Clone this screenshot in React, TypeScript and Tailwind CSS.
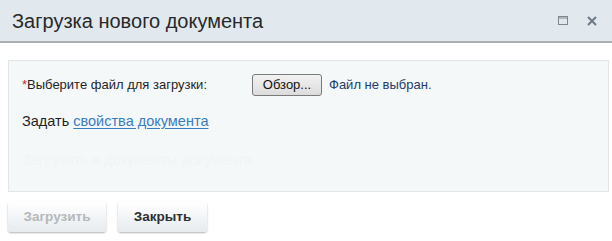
import React from 'react'

export default function App() {
  return (
    <div className="w-[612px] h-[241px] bg-white overflow-hidden font-['Liberation_Sans',Arial,sans-serif]">
      <div className="h-[43px] bg-[#e1e9ef] border-b-2 border-[#a8aeb3] flex items-center justify-between pl-[12px] pr-[15px]">
        <h1 className="text-[20px] text-[#282828] leading-none">Загрузка нового документа</h1>
        <div className="flex items-center gap-[19px] text-[#7c8790]">
          <svg width="10" height="9" viewBox="0 0 10 9" fill="none">
            <rect x="0.5" y="0.5" width="9" height="8" stroke="#7c8790" />
            <line x1="0.5" y1="2" x2="9.5" y2="2" stroke="#7c8790" />
          </svg>
          <svg width="10" height="10" viewBox="0 0 10 10">
            <path d="M1 1 L9 9 M9 1 L1 9" stroke="#6e7a84" strokeWidth="2" />
          </svg>
        </div>
      </div>

      <div className="pl-[8px] pr-[3px] pt-[17px]">
        <div className="h-[132px] bg-[#f5f8f9] border border-[#e0e6e8] pl-[13px] pt-[13px] text-[13px] text-[#1f1f1f]">
          <div className="flex items-center h-[22px]">
            <span className="w-[230px]">
              <span className="text-[#d0262a]">*</span>Выберите файл для загрузки:
            </span>
            <button className="h-[22px] w-[70px] border border-[#7a7a7a] rounded-[3px] bg-gradient-to-b from-[#f2f2f2] to-[#dcdcdc] text-[13px] text-[#111]">
              Обзор...
            </button>
            <span className="ml-[7px] text-[#1d3c6a]">Файл не выбран.</span>
          </div>
          <div className="mt-[15px] text-[14.5px]">
            Задать <a className="text-[#3a7cc0] underline underline-offset-2">свойства документа</a>
          </div>
          <div className="mt-[17px] text-[14.5px] text-[#f1f4f6]">
            Загрузить в документы документа
          </div>
        </div>
      </div>

      <div className="flex gap-[12px] pl-[8px] pt-[10px]">
        <button className="w-[98px] h-[30px] rounded-[3px] bg-gradient-to-b from-[#ffffff] to-[#e6ebee] shadow-[0_1px_2px_rgba(0,0,0,0.3)] text-[13.5px] font-bold text-[#b4b9bc]">
          Загрузить
        </button>
        <button className="w-[89px] h-[30px] rounded-[3px] bg-gradient-to-b from-[#ffffff] to-[#e6ebee] shadow-[0_1px_2px_rgba(0,0,0,0.3)] text-[13.5px] font-bold text-[#2c2f31]">
          Закрыть
        </button>
      </div>
    </div>
  )
}
